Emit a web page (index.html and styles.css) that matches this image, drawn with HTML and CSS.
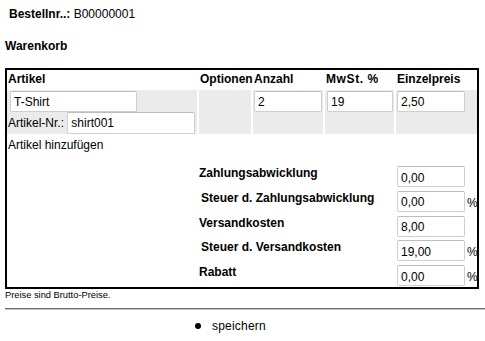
FILE: index.html
```html
<!DOCTYPE html>
<html lang="de">
<head>
<meta charset="utf-8">
<title>Warenkorb</title>
<link rel="stylesheet" href="styles.css">
</head>
<body>
<div class="order"><b>Bestellnr..:</b> B00000001</div>
<div class="cart-title">Warenkorb</div>
<div class="cart">
  <div class="items">
    <div class="head">Artikel</div>
    <div class="head">Optionen</div>
    <div class="head">Anzahl</div>
    <div class="head mwst">MwSt.&nbsp;%</div>
    <div class="head">Einzelpreis</div>

    <div class="cell article">
      <input class="inp name" type="text" value="T-Shirt">
      <div class="artnr">Artikel-Nr.: <input class="inp nr" type="text" value="shirt001"></div>
    </div>
    <div class="cell"></div>
    <div class="cell"><input class="inp qty" type="text" value="2"></div>
    <div class="cell"><input class="inp tax" type="text" value="19"></div>
    <div class="cell"><input class="inp price" type="text" value="2,50"></div>

    <div class="add">Artikel hinzufügen</div>
  </div>
  <div class="costs">
    <div class="lbl">Zahlungsabwicklung</div>
    <input class="inp cost" type="text" value="0,00">
    <div class="pct"></div>

    <div class="lbl ind">Steuer d. Zahlungsabwicklung</div>
    <input class="inp cost" type="text" value="0,00">
    <div class="pct">%</div>

    <div class="lbl">Versandkosten</div>
    <input class="inp cost" type="text" value="8,00">
    <div class="pct"></div>

    <div class="lbl ind">Steuer d. Versandkosten</div>
    <input class="inp cost" type="text" value="19,00">
    <div class="pct">%</div>

    <div class="lbl">Rabatt</div>
    <input class="inp cost" type="text" value="0,00">
    <div class="pct">%</div>
  </div>
</div>
<div class="note">Preise sind Brutto-Preise.</div>
<hr class="rule">
<div class="actions"><span class="dot"></span><span class="save">speichern</span></div>
</body>
</html>
```
FILE: styles.css
```css
* { box-sizing: border-box; }
html, body { margin: 0; padding: 0; background: #fff; }
body {
  font-family: "Liberation Sans", Arial, sans-serif;
  font-size: 12px;
  color: #000;
  width: 485px;
  overflow: hidden;
}
.order {
  padding: 7px 0 0 9px;
  line-height: 14px;
}
.cart-title {
  margin: 18px 0 0 5px;
  line-height: 14px;
  font-weight: bold;
}
.cart {
  margin: 15px 0 0 5px;
  width: 474px;
  border: 2px solid #000;
  padding-bottom: 1px;
}
.items {
  display: grid;
  grid-template-columns: 190px 52px 70px 69px 81px;
  column-gap: 2px;
  row-gap: 2px;
}
.head {
  font-weight: bold;
  line-height: 18px;
  padding-left: 1px;
}
.mwst { letter-spacing: 0.6px; }
.cell {
  background: #ebebeb;
  height: 44px;
  padding: 1px 0 0 1px;
}
.inp {
  display: block;
  height: 21px;
  border: 1px solid #cfcfcf;
  border-top-color: #bdbdbd;
  border-radius: 2px;
  background: #fff;
  font-family: "Liberation Sans", Arial, sans-serif;
  font-size: 12px;
  color: #000;
  padding: 0 0 0 3px;
  margin: 0;
  outline: none;
}
.name { width: 127px; margin-left: 2px; }
.artnr {
  display: flex;
  align-items: center;
  white-space: pre;
  line-height: 14px;
}
.nr { width: 128px; height: 22px; }
.qty { width: 68px; }
.tax { width: 66px; margin-left: 1px; }
.price { width: 68px; }
.add {
  grid-column: 1 / -1;
  line-height: 16px;
  padding: 1px 0 0 1px;
}
.costs {
  display: grid;
  grid-template-columns: 198px 68px 12px;
  row-gap: 3.75px;
  margin: 13px 0 0 192px;
}
.lbl {
  font-weight: bold;
  line-height: 14px;
  align-self: start;
}
.lbl.ind { padding-left: 2px; }
.cost { width: 68px; padding-left: 3px; padding-top: 2px; }
.pct {
  align-self: center;
  padding: 3px 0 0 2px;
  line-height: 14px;
}
.note {
  margin-left: 5px;
  font-size: 9.3px;
  line-height: 12px;
}
.rule {
  margin: 7px 0 0 5px;
  height: 0;
  border: 0;
  border-top: 1px solid #6f6f6f;
  border-bottom: 1px solid #c4c4c4;
  width: 480px;
}
.actions {
  display: flex;
  align-items: center;
  margin-top: 9px;
  padding-left: 195px;
  line-height: 14px;
}
.dot {
  width: 6px;
  height: 6px;
  border-radius: 50%;
  background: #000;
  margin-right: 11px;
}
.save { letter-spacing: 0.2px; }
```
